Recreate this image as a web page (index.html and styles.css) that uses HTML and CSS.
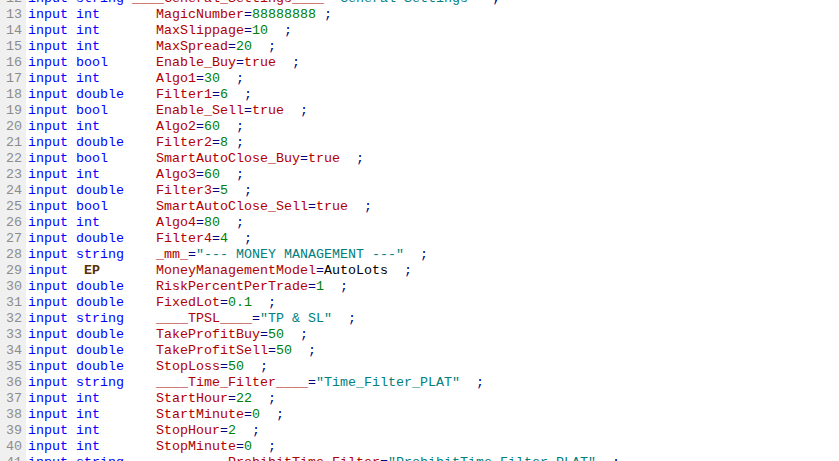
FILE: index.html
```html
<!DOCTYPE html>
<html>
<head>
<meta charset="utf-8">
<link rel="stylesheet" href="styles.css">
</head>
<body>
<div class="editor">
<div class="gutter">
<div class="ln">12</div><div class="ln">13</div><div class="ln">14</div><div class="ln">15</div><div class="ln">16</div><div class="ln">17</div><div class="ln">18</div><div class="ln">19</div><div class="ln">20</div><div class="ln">21</div><div class="ln">22</div><div class="ln">23</div><div class="ln">24</div><div class="ln">25</div><div class="ln">26</div><div class="ln">27</div><div class="ln">28</div><div class="ln">29</div><div class="ln">30</div><div class="ln">31</div><div class="ln">32</div><div class="ln">33</div><div class="ln">34</div><div class="ln">35</div><div class="ln">36</div><div class="ln">37</div><div class="ln">38</div><div class="ln">39</div><div class="ln">40</div><div class="ln">41</div>
</div>
<div class="code">
<div class="line"><span class="k">input string</span> <span class="n">____General_Settings____</span><span class="p">=</span><span class="s">"General Settings"</span>  <span class="p">;</span></div>
<div class="line"><span class="k">input int</span>       <span class="n">MagicNumber</span><span class="p">=</span><span class="v">88888888</span> <span class="p">;</span></div>
<div class="line"><span class="k">input int</span>       <span class="n">MaxSlippage</span><span class="p">=</span><span class="v">10</span>  <span class="p">;</span></div>
<div class="line"><span class="k">input int</span>       <span class="n">MaxSpread</span><span class="p">=</span><span class="v">20</span>  <span class="p">;</span></div>
<div class="line"><span class="k">input bool</span>      <span class="n">Enable_Buy</span><span class="p">=</span><span class="c">true</span>  <span class="p">;</span></div>
<div class="line"><span class="k">input int</span>       <span class="n">Algo1</span><span class="p">=</span><span class="v">30</span>  <span class="p">;</span></div>
<div class="line"><span class="k">input double</span>    <span class="n">Filter1</span><span class="p">=</span><span class="v">6</span>  <span class="p">;</span></div>
<div class="line"><span class="k">input bool</span>      <span class="n">Enable_Sell</span><span class="p">=</span><span class="c">true</span>  <span class="p">;</span></div>
<div class="line"><span class="k">input int</span>       <span class="n">Algo2</span><span class="p">=</span><span class="v">60</span>  <span class="p">;</span></div>
<div class="line"><span class="k">input double</span>    <span class="n">Filter2</span><span class="p">=</span><span class="v">8</span> <span class="p">;</span></div>
<div class="line"><span class="k">input bool</span>      <span class="n">SmartAutoClose_Buy</span><span class="p">=</span><span class="c">true</span>  <span class="p">;</span></div>
<div class="line"><span class="k">input int</span>       <span class="n">Algo3</span><span class="p">=</span><span class="v">60</span>  <span class="p">;</span></div>
<div class="line"><span class="k">input double</span>    <span class="n">Filter3</span><span class="p">=</span><span class="v">5</span>  <span class="p">;</span></div>
<div class="line"><span class="k">input bool</span>      <span class="n">SmartAutoClose_Sell</span><span class="p">=</span><span class="c">true</span>  <span class="p">;</span></div>
<div class="line"><span class="k">input int</span>       <span class="n">Algo4</span><span class="p">=</span><span class="v">80</span>  <span class="p">;</span></div>
<div class="line"><span class="k">input double</span>    <span class="n">Filter4</span><span class="p">=</span><span class="v">4</span>  <span class="p">;</span></div>
<div class="line"><span class="k">input string</span>    <span class="n">_mm_</span><span class="p">=</span><span class="s">"--- MONEY MANAGEMENT ---"</span>  <span class="p">;</span></div>
<div class="line"><span class="k">input</span>  <span class="e">EP</span>       <span class="n">MoneyManagementModel</span><span class="p">=</span><span class="x">AutoLots</span>  <span class="p">;</span></div>
<div class="line"><span class="k">input double</span>    <span class="n">RiskPercentPerTrade</span><span class="p">=</span><span class="v">1</span>  <span class="p">;</span></div>
<div class="line"><span class="k">input double</span>    <span class="n">FixedLot</span><span class="p">=</span><span class="v">0.1</span>  <span class="p">;</span></div>
<div class="line"><span class="k">input string</span>    <span class="n">____TPSL____</span><span class="p">=</span><span class="s">"TP &amp; SL"</span>  <span class="p">;</span></div>
<div class="line"><span class="k">input double</span>    <span class="n">TakeProfitBuy</span><span class="p">=</span><span class="v">50</span>  <span class="p">;</span></div>
<div class="line"><span class="k">input double</span>    <span class="n">TakeProfitSell</span><span class="p">=</span><span class="v">50</span>  <span class="p">;</span></div>
<div class="line"><span class="k">input double</span>    <span class="n">StopLoss</span><span class="p">=</span><span class="v">50</span>  <span class="p">;</span></div>
<div class="line"><span class="k">input string</span>    <span class="n">____Time_Filter____</span><span class="p">=</span><span class="s">"Time_Filter_PLAT"</span>  <span class="p">;</span></div>
<div class="line"><span class="k">input int</span>       <span class="n">StartHour</span><span class="p">=</span><span class="v">22</span>  <span class="p">;</span></div>
<div class="line"><span class="k">input int</span>       <span class="n">StartMinute</span><span class="p">=</span><span class="v">0</span>  <span class="p">;</span></div>
<div class="line"><span class="k">input int</span>       <span class="n">StopHour</span><span class="p">=</span><span class="v">2</span>  <span class="p">;</span></div>
<div class="line"><span class="k">input int</span>       <span class="n">StopMinute</span><span class="p">=</span><span class="v">0</span>  <span class="p">;</span></div>
<div class="line"><span class="k">input string</span>    <span class="n">_________ProhibitTime_Filter</span><span class="p">=</span><span class="s">"ProhibitTime_Filter_PLAT"</span>  <span class="p">;</span></div>
</div>
</div>
</body>
</html>
```

FILE: styles.css
```css
html, body {
  margin: 0;
  padding: 0;
  height: 100%;
  overflow: hidden;
  background: #ffffff;
}

.editor {
  display: flex;
  margin-top: -9px;
  height: calc(100% + 9px);
  font-family: "Liberation Mono", "Courier New", monospace;
  font-size: 13.333px;
  line-height: 16px;
}

.gutter {
  width: 26px;
  flex: none;
  background: #f0f0f0;
  color: #8c8c8c;
  text-align: right;
  box-sizing: border-box;
  padding-right: 4px;
}

.ln {
  height: 16px;
  white-space: pre;
}

.code {
  flex: 1;
  padding-left: 2px;
}

.line {
  height: 16px;
  white-space: pre;
  color: #000000;
}

.k { color: #0000ff; }
.n { color: #b00000; }
.c { color: #b00000; }
.v { color: #008000; }
.s { color: #008080; }
.p { color: #000080; }
.x { color: #000000; }
.e { color: #5a3000; font-weight: bold; }
```
